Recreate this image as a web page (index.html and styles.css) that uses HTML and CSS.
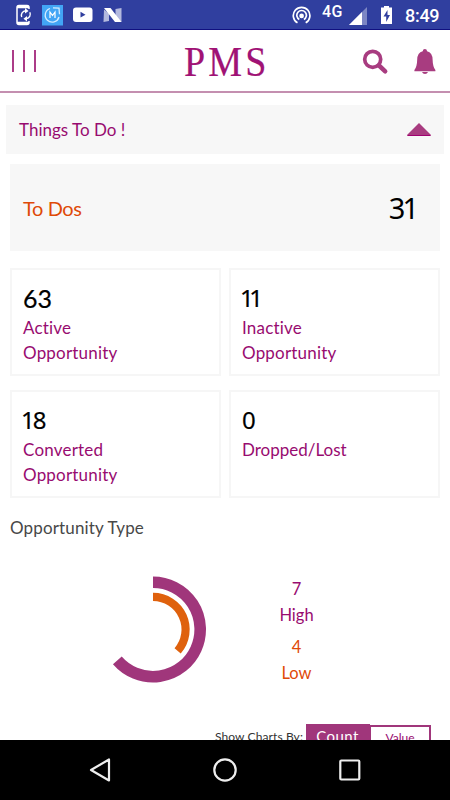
FILE: index.html
```html
<!DOCTYPE html>
<html lang="en">
<head>
<meta charset="utf-8">
<title>PMS</title>
<link rel="stylesheet" href="styles.css">
</head>
<body>
<div class="screen">
  <div class="status">
    <svg class="status-icons" width="130" height="29" viewBox="0 0 130 29">
      <path d="M29 9V7.500q0-2-2-2h-8q-2 0-2 2v15q0 2 2 2h8q2 0 2-2V21" fill="none" stroke="#fff" stroke-width="1.500"/>
      <path d="M17 7h12M17 22.800h12" stroke="#fff" stroke-width="2.300"/>
      <path d="M21.700 17a4.500 4.500 0 0 1 4-6.200M29.800 12.200a4.500 4.500 0 0 1-3.500 6.500" fill="none" stroke="#fff" stroke-width="1.400"/>
      <path d="M25 8l3.500 2.900L25 13.500zM27 16l-3.500 2.700L27 21.500z" fill="#fff"/>
      <rect x="42" y="5" width="21" height="20.500" fill="#42a5f5"/>
      <path d="M50 8.500a7 7 0 1 0 9 8.500M53 7.800l6 .4.500 6" fill="none" stroke="#d5ecff" stroke-width="1.300"/>
      <path d="M50 18v-6l2.500 3.500L55 12v6" fill="none" stroke="#fff" stroke-width="1.200"/>
      <rect x="73" y="7.500" width="19.500" height="14.500" rx="3" fill="#fff"/>
      <path d="M80.500 11.800v5.800l5-2.900z" fill="#303f9f"/>
      <path d="M104 9.500l5 4v7.500l-5.500 1zM115.500 9l6-1v14l-6-4z" fill="#b3b9de"/>
      <path d="M104 8h6.500l11 14H115z" fill="#fff"/>
    </svg>
    <div class="status-right">
      <svg width="20" height="29" viewBox="0 0 20 29" fill="none" stroke="#fff" stroke-width="1.700">
        <path d="M5.500 22.800a8.300 8.300 0 1 1 8.200 0M7.300 19.500a4.800 4.800 0 1 1 4.600 0"/>
        <circle cx="9.600" cy="15.900" r="1.500" fill="#fff"/>
      </svg>
      <span class="network">4G</span>
      <svg class="signal" width="46" height="29" viewBox="0 0 46 29">
        <path d="M18 7v18H0z" fill="#7c86c3"/>
        <path d="M13 12v13H0z" fill="#fff"/>
        <path d="M32 7.500h3V6h5v1.500h3V24H32z" fill="#fff"/>
        <path d="M38.500 10L34.500 16.500h2.700v5.500l3.800-7h-2.500z" fill="#303f9f"/>
      </svg>
      <span class="clock">8:49</span>
    </div>
  </div>

  <header class="header">
    <div class="menu"><i></i><i></i><i></i></div>
    <h1 class="brand">PMS</h1>
    <svg class="header-icons" width="90" height="61" viewBox="0 0 90 61">
      <circle cx="10.700" cy="29.300" r="8" fill="none" stroke="#a83c80" stroke-width="3.700"/>
      <path d="M17 35.500l6.200 5.800" stroke="#a83c80" stroke-width="4.500" stroke-linecap="round"/>
      <path d="M62.900 19q2 0 2.200 2.200 5.400 1.600 5.500 8.300.2 7.500 2.800 10.500v1.200h-21V40q2.600-3 2.800-10.500.1-6.700 5.500-8.300Q60.900 19 62.900 19zM60 42h6q-.8 2-3 2t-3-2z" fill="#a83c80"/>
    </svg>
  </header>

  <main class="content">
    <div class="panel">
      <span class="panel-title">Things To Do !</span>
      <svg width="24" height="14" viewBox="0 0 24 14"><path d="M12 0L23.500 11.500V13H.5v-1.500z" fill="#a83c80"/><path d="M.5 12.500h23" stroke="#a00070"/></svg>
    </div>
    <div class="todos"><span class="todos-label">To Dos</span><span class="todos-count">31</span></div>
    <div class="cards">
      <div class="card"><b>63</b><span class="opp">Active<br>Opportunity</span></div>
      <div class="card"><b class="eleven">11</b><span class="opp">Inactive<br>Opportunity</span></div>
      <div class="card"><b class="eighteen">18</b><span class="opp">Converted<br>Opportunity</span></div>
      <div class="card"><b class="zero">0</b><span class="dropped">Dropped/Lost</span></div>
    </div>
    <h2 class="section-title">Opportunity Type</h2>
    <div class="chart-row">
      <svg class="chart" width="108" height="108" viewBox="0 0 108 108" fill="none">
        <path d="M54 6.300A47.200 47.200 0 1 1 18.330 84.410" stroke="#a0367b" stroke-width="11.600"/>
        <path d="M54 20.900A32.600 32.600 0 0 1 78.640 74.840" stroke="#df610d" stroke-width="8.200"/>
      </svg>
      <div class="legend">
        <span class="high">7</span><span class="high">High</span>
        <span class="low">4</span><span class="low">Low</span>
      </div>
    </div>
    <div class="toggle-row">
      <span class="toggle-label">Show Charts By:</span>
      <span class="toggle active">Count</span><span class="toggle">Value</span>
    </div>
  </main>

  <nav class="navbar">
    <svg width="450" height="60" viewBox="0 0 450 60" fill="none" stroke="#eee" stroke-width="2.200">
      <path d="M109 19.500v21L91 30z" stroke-linejoin="round"/>
      <circle cx="225" cy="30" r="10.700"/>
      <rect x="340.300" y="20.500" width="19" height="19" rx="1"/>
    </svg>
  </nav>
</div>
</body>
</html>
```

FILE: styles.css
```css
* { box-sizing: border-box; }
body { margin: 0; background: #fff; font-family: Lato, "Liberation Sans", sans-serif; }
.screen { width: 450px; height: 800px; display: flex; flex-direction: column; overflow: hidden; background: #fff; }
.status { flex: none; height: 30px; display: flex; justify-content: space-between; background: #303f9f; border-bottom: 1px solid #101080; color: #fff; font-family: Roboto, sans-serif; }
.status svg { display: block; flex: none; }
.status-right { display: flex; width: 158px; }
.network { width: 37px; padding-left: 10px; font-size: 16px; line-height: 23px; font-weight: 500; letter-spacing: .5px; white-space: nowrap; }
.clock { margin-left: 10px; font-size: 18px; line-height: 31px; font-weight: 500; letter-spacing: -0.3px; }
.header { flex: none; height: 63px; padding-left: 12px; display: flex; align-items: flex-start; border-bottom: 2px solid #c48fb0; }
.menu { display: flex; gap: 9px; width: 172px; padding-top: 20px; }
.menu i { width: 2px; height: 22px; background: #ac3c88; }
.brand { margin: 0; width: 178px; color: #a01275; font: 400 43px/63px "Liberation Serif", serif; letter-spacing: 3.5px; transform: scaleX(.885); transform-origin: left; -webkit-text-stroke: .2px #a01275; }
.header-icons { display: block; flex: none; margin-right: -2px; }
.content { flex: 1; min-height: 0; overflow: hidden; padding-top: 12px; display: flex; flex-direction: column; }
.panel { flex: none; height: 49px; margin: 0 6px; padding: 0 13px; display: flex; align-items: center; justify-content: space-between; background: #f7f7f7; }
.panel-title { color: #980b70; font-size: 17px; letter-spacing: 0; }
.todos { flex: none; height: 87px; margin: 10px 10px 17px; padding: 0 24px 0 13px; display: flex; align-items: center; justify-content: space-between; background: #f7f7f7; }
.todos-label { color: #df4a08; font-size: 20px; letter-spacing: -.4px; }
.todos-count { font-family: "Noto Sans", sans-serif; font-size: 29px; letter-spacing: -3px; color: #000; }
.cards { flex: none; margin: 0 10px; display: grid; grid-template-columns: 1fr 1fr; grid-auto-rows: 108px; gap: 14px 8px; }
.card { padding: 13px 11px 0; display: flex; flex-direction: column; border: 2px solid #f6f6f6; }
.card b { flex: none; height: 32px; color: #000; font-weight: 400; font-size: 25px; line-height: 31px; -webkit-text-stroke: .2px #000; }
.card .eleven, .card .eighteen, .card .zero { font-family: "Noto Sans", sans-serif; font-size: 24px; line-height: 29px; }
.card .eleven { letter-spacing: -4.500px; margin-left: -2px; }
.card .eighteen { letter-spacing: -2px; margin-left: -2px; }
.card span { color: #980b70; font-size: 17px; line-height: 25px; }
.card .opp { letter-spacing: .2px; }
.section-title { flex: none; margin: 18px 10px 0; color: #484848; font-weight: 400; font-size: 17px; line-height: 24px; letter-spacing: .15px; }
.chart-row { flex: none; height: 143px; padding: 36px 0 0 99px; display: flex; }
.chart { flex: none; }
.legend { width: 75px; margin-left: 52px; display: flex; flex-direction: column; align-items: center; font-size: 16.5px; line-height: 26px; }
.legend .low { position: relative; top: 6px; color: #df4a08; }
.high { color: #980b70; }
.toggle-row { flex: none; margin: 41px 19px 0 215px; display: flex; align-items: flex-start; }
.toggle-label { width: 91px; color: #333; font-size: 12px; line-height: 26px; letter-spacing: .1px; white-space: nowrap; }
.toggle { flex: 1; height: 28px; margin-top: 1px; border: 2px solid #a0367b; border-left-width: 1px; text-align: center; color: #980b70; font-size: 12px; line-height: 21px; }
.toggle.active { flex: 0 0 64px; margin-top: 0; background: #a0367b; color: #fff; font-size: 15px; line-height: 21px; letter-spacing: .4px; }
.navbar { flex: none; height: 60px; background: #000; }
.navbar svg { display: block; }
```
